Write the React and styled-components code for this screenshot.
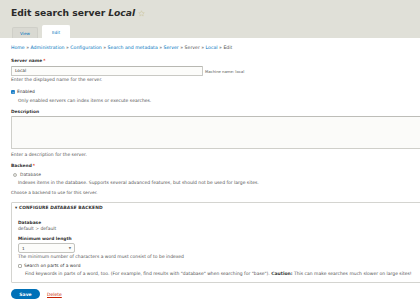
import React from 'react';
import styled, { createGlobalStyle } from 'styled-components';

const GlobalStyle = createGlobalStyle`
  html, body {
    margin: 0;
    padding: 0;
    background: #ffffff;
    overflow: hidden;
  }
  body {
    width: 420px;
    height: 303px;
    font-family: "DejaVu Sans", "Liberation Sans", sans-serif;
    color: #333333;
  }
`;

// 상단 헤더
const Header = styled.header`
  height: 38px;
  background-color: #e0e0d8;
  padding: 0 11px;
  box-sizing: border-box;
  display: flex;
  flex-direction: column;
  justify-content: space-between;
`;

const Title = styled.h1`
  margin: 0;
  padding-top: 8px;
  font-size: 9.2px;
  line-height: 10px;
  font-weight: 600;
  color: #2a2a2a;
  display: flex;
  align-items: center;
  gap: 3px;

  em {
    font-style: italic;
  }
`;

const Tabs = styled.nav`
  display: flex;
  align-items: flex-end;
  gap: 4px;
  margin-left: 1px;
`;

const Tab = styled.div`
  height: ${(p) => (p.$active ? '13px' : '11px')};
  width: ${(p) => (p.$active ? '28px' : '26px')};
  box-sizing: border-box;
  display: flex;
  align-items: center;
  justify-content: center;
  font-size: 4.2px;
  color: #0074bd;
  background-color: ${(p) => (p.$active ? '#ffffff' : '#d9d9d2')};
  border-radius: 2px 2px 0 0;
  border: 1px solid ${(p) => (p.$active ? '#ffffff' : '#cfcfc8')};
  border-bottom: none;
`;

const Content = styled.main`
  width: 440px;
  padding: 0 11px;
  box-sizing: border-box;
`;

const Line = styled.div`
  margin-top: ${(p) => p.$mt || 0}px;
  font-size: ${(p) => p.$size || 4.5}px;
  line-height: 6px;
  height: 6px;
  white-space: nowrap;
  color: ${(p) => p.$color || '#333333'};
  padding-left: ${(p) => p.$indent || 0}px;
`;

const Breadcrumb = styled(Line)`
  color: #555555;
  font-size: 4.65px;

  a {
    color: #0074bd;
    text-decoration: none;
  }
`;

const Label = styled(Line)`
  font-weight: bold;
  color: #333333;
  font-size: 4.35px;
`;

const Required = styled.span`
  color: #e32700;
  margin-left: 1px;
`;

const Description = styled(Line)`
  color: #555555;
  font-size: ${(p) => p.$size || 4.5}px;

  b {
    color: #333333;
  }
`;

const InputRow = styled.div`
  margin-top: ${(p) => p.$mt || 0}px;
  display: flex;
  align-items: center;
  gap: 2px;
`;

const TextInput = styled.div`
  width: 192px;
  height: 10px;
  box-sizing: border-box;
  border: 1px solid #c9c9c4;
  border-top-color: #b8b8b2;
  border-radius: 1px;
  background-color: #fcfcfa;
  font-size: 4.3px;
  line-height: 8px;
  padding-left: 3px;
  color: #333333;
`;

const MachineName = styled.span`
  font-size: 3.8px;
  color: #555555;
`;

const TextArea = styled.div`
  margin-top: ${(p) => p.$mt || 0}px;
  height: 33px;
  box-sizing: border-box;
  border: 1px solid #cfcfca;
  border-top-color: #bdbdb8;
  border-radius: 1px;
  background-color: #fbfbf9;
`;

const CheckRow = styled(Line)`
  display: flex;
  align-items: center;
  gap: 2px;
  font-size: 4.4px;
  color: #333333;
`;

const CheckBox = styled.span`
  width: 4px;
  height: 4px;
  box-sizing: border-box;
  border-radius: 1px;
  border: ${(p) => (p.$checked ? 'none' : '0.6px solid #b0b0aa')};
  background-color: ${(p) => (p.$checked ? '#1e80c8' : '#ffffff')};
  display: inline-flex;
  align-items: center;
  justify-content: center;
`;

const Radio = styled.span`
  width: 2px;
  height: 2px;
  border-radius: 50%;
  border: 0.5px solid #b5b5b0;
  background: #e8e8e4;
  margin: 0 1px;
`;

const Fieldset = styled.section`
  margin-top: ${(p) => p.$mt || 0}px;
  border: 1px solid #d4d4d0;
  border-radius: 1px;
  padding: 1px 0 5px 0;
`;

const Legend = styled(Line)`
  padding-left: 3px;
  font-size: 4.4px;
  font-weight: bold;
  letter-spacing: 0.1px;
  text-transform: uppercase;
  color: #333333;
`;

const FieldsetBody = styled.div`
  padding-left: 6px;
`;

const Select = styled.div`
  margin-top: ${(p) => p.$mt || 0}px;
  width: 57px;
  height: 10px;
  box-sizing: border-box;
  border: 1px solid #c4c4bf;
  border-radius: 2px;
  background: #fcfcfa;
  display: flex;
  align-items: center;
  justify-content: space-between;
  padding: 0 3px;
  font-size: 4.2px;
  color: #333333;
`;

const Caret = styled.span`
  font-size: 3px;
  color: #777777;
`;

const Actions = styled.div`
  margin-top: 6px;
  display: flex;
  align-items: center;
  gap: 7px;
`;

const SaveButton = styled.button`
  width: 29px;
  height: 10px;
  padding: 0;
  border: none;
  border-radius: 6px;
  background-color: #0071b8;
  color: #ffffff;
  font-family: inherit;
  font-size: 4.5px;
  font-weight: bold;
  display: flex;
  align-items: center;
  justify-content: center;
`;

const DeleteLink = styled.a`
  font-size: 4.5px;
  color: #c72100;
  text-decoration: underline;
`;

const Star = () => (
  <svg width="7" height="7" viewBox="0 0 24 24" aria-hidden>
    <path
      d="M12 2.5l2.9 6.2 6.7.7-5 4.6 1.4 6.6L12 17.3l-6 3.3 1.4-6.6-5-4.6 6.7-.7z"
      fill="none"
      stroke="#c9c29a"
      strokeWidth="1.6"
      strokeLinejoin="round"
    />
  </svg>
);

const Check = () => (
  <svg width="3" height="3" viewBox="0 0 10 10" aria-hidden>
    <path d="M1.5 5.2l2.3 2.3 4.7-5" fill="none" stroke="#ffffff" strokeWidth="1.8" />
  </svg>
);

const crumbs = ['Home', 'Administration', 'Configuration', 'Search and metadata', 'Server'];

const App = () => {
  return (
    <>
      <GlobalStyle />
      <Header>
        <Title>
          Edit search server <em>Local</em>
          <Star />
        </Title>
        <Tabs>
          <Tab>View</Tab>
          <Tab $active>Edit</Tab>
        </Tabs>
      </Header>

      <Content>
        <Breadcrumb $mt={7}>
          {crumbs.map((c) => (
            <React.Fragment key={c}>
              <a href="#">{c}</a> »{' '}
            </React.Fragment>
          ))}
          Server » <a href="#">Local</a> » Edit
        </Breadcrumb>

        {/* 서버 이름 */}
        <Label $mt={7}>
          Server name<Required>*</Required>
        </Label>
        <InputRow $mt={2}>
          <TextInput>Local</TextInput>
          <MachineName>Machine name: local</MachineName>
        </InputRow>
        <Description $mt={1}>Enter the displayed name for the server.</Description>

        <CheckRow $mt={6}>
          <CheckBox $checked>
            <Check />
          </CheckBox>
          Enabled
        </CheckRow>
        <Description $mt={3} $indent={7}>
          Only enabled servers can index items or execute searches.
        </Description>

        {/* 설명 */}
        <Label $mt={5}>Description</Label>
        <TextArea $mt={1} />
        <Description $mt={3}>Enter a description for the server.</Description>

        {/* 백엔드 */}
        <Label $mt={5}>
          Backend<Required>*</Required>
        </Label>
        <CheckRow $mt={3} $indent={1}>
          <Radio />
          <span style={{ color: '#555555' }}>Database</span>
        </CheckRow>
        <Description $mt={2} $indent={7}>
          Indexes items in the database. Supports several advanced features, but should not be used for large sites.
        </Description>
        <Description $mt={4} $size={4.3}>
          Choose a backend to use for this server.
        </Description>

        <Fieldset $mt={6}>
          <Legend $mt={1}>
            ▾ Configure <em>Database</em> backend
          </Legend>
          <FieldsetBody>
            <Label $mt={9}>Database</Label>
            <Description>default &gt; default</Description>

            <Label $mt={4}>Minimum word length</Label>
            <Select $mt={1}>
              1<Caret>▼</Caret>
            </Select>
            <Description $mt={1}>
              The minimum number of characters a word must consist of to be indexed
            </Description>

            <CheckRow $mt={3}>
              <CheckBox />
              Search on parts of a word
            </CheckRow>
            <Description $mt={2} $indent={7}>
              Find keywords in parts of a word, too. (For example, find results with "database" when searching for "base").{' '}
              <b>Caution:</b> This can make searches much slower on large sites!
            </Description>
          </FieldsetBody>
        </Fieldset>

        <Actions>
          <SaveButton type="button">Save</SaveButton>
          <DeleteLink href="#">Delete</DeleteLink>
        </Actions>
      </Content>
    </>
  );
};

export default App;
